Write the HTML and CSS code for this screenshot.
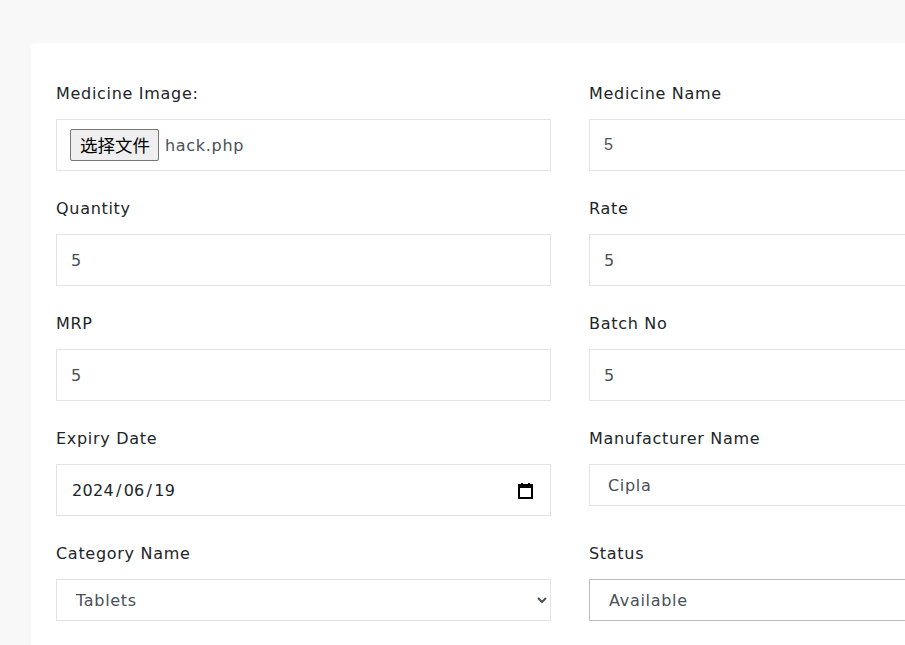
FILE: index.html
```html
<!DOCTYPE html>
<html>
<head>
<meta charset="utf-8">
<link rel="stylesheet" href="styles.css">
</head>
<body>
<div class="card">
  <form class="form-grid">
    <div class="group">
      <label class="lbl">Medicine Image:</label>
      <div class="ctrl file-box"><span class="file-btn">选择文件</span><span class="file-name">hack.php</span></div>
    </div>
    <div class="group">
      <label class="lbl">Medicine Name</label>
      <input class="ctrl plain" type="text" value="5">
    </div>
    <div class="group">
      <label class="lbl">Quantity</label>
      <input class="ctrl" type="text" value="5">
    </div>
    <div class="group">
      <label class="lbl">Rate</label>
      <input class="ctrl" type="text" value="5">
    </div>
    <div class="group">
      <label class="lbl">MRP</label>
      <input class="ctrl" type="text" value="5">
    </div>
    <div class="group">
      <label class="lbl">Batch No</label>
      <input class="ctrl" type="text" value="5">
    </div>
    <div class="group">
      <label class="lbl">Expiry Date</label>
      <div class="ctrl date">
        <span class="date-val">2024<span class="sep">/</span>06<span class="sep">/</span>19</span>
        <svg class="cal" width="15" height="17" viewBox="0 0 15 17">
          <rect x="1" y="3" width="13" height="13" fill="none" stroke="#000" stroke-width="2"/>
          <rect x="1" y="3" width="13" height="3" fill="#000"/>
          <rect x="3" y="1" width="2" height="3" fill="#000"/>
          <rect x="10" y="1" width="2" height="3" fill="#000"/>
        </svg>
      </div>
    </div>
    <div class="group">
      <label class="lbl">Manufacturer Name</label>
      <input class="ctrl short wide-pad" type="text" value="Cipla">
    </div>
    <div class="group">
      <label class="lbl">Category Name</label>
      <select class="ctrl short sel"><option>Tablets</option></select>
    </div>
    <div class="group">
      <label class="lbl">Status</label>
      <select class="ctrl short sel status"><option>Available</option></select>
    </div>
  </form>
</div>
</body>
</html>
```
FILE: styles.css
```css
html, body {
  margin: 0;
  padding: 0;
  background: #f8f8f8;
  font-family: "DejaVu Sans", sans-serif;
  overflow: hidden;
}
.card {
  margin: 43px 0 0 31px;
  width: 1100px;
  background: #fff;
  border-radius: 5px 0 0 0;
  padding: 38px 0 40px 25px;
  box-sizing: border-box;
  min-height: 620px;
}
.form-grid {
  display: grid;
  grid-template-columns: 495px 495px;
  column-gap: 38px;
  row-gap: 25px;
  align-items: start;
}
.group {
  display: flex;
  flex-direction: column;
}
.lbl {
  font-size: 16px;
  line-height: 24px;
  letter-spacing: 0.7px;
  color: #212529;
  padding-top: 1px;
  margin-bottom: 13px;
}
.ctrl {
  box-sizing: border-box;
  height: 52px;
  width: 100%;
  border: 1px solid #e3e3e3;
  background: #fff;
  padding: 0 14px;
  font-family: "DejaVu Sans", sans-serif;
  font-size: 16px;
  letter-spacing: 0.7px;
  color: #495057;
  outline: none;
  margin: 0;
  border-radius: 0;
}
.plain {
  font-family: "Liberation Sans", Arial, sans-serif;
  font-size: 16px;
  letter-spacing: 0;
}
.short {
  height: 42px;
}
.wide-pad {
  padding-left: 18px;
}
.file-box {
  display: flex;
  align-items: center;
  padding: 0 13px;
}
.file-btn {
  font-family: "Noto Sans CJK SC", sans-serif;
  font-size: 17.5px;
  letter-spacing: 0;
  color: #000;
  background: #efefef;
  border: 1px solid #767676;
  border-radius: 2px;
  height: 32px;
  box-sizing: border-box;
  padding: 0 8px 0 9px;
  display: flex;
  align-items: center;
  line-height: 1;
}
.file-name {
  margin-left: 6px;
  color: #495057;
}
.date {
  display: flex;
  align-items: center;
  justify-content: space-between;
  padding-left: 15px;
  padding-right: 17px;
  color: #212529;
  letter-spacing: 0.3px;
}
.sep {
  margin: 0 2px;
}
.cal {
  display: block;
}
.sel {
  padding-left: 15px;
  padding-right: 8px;
}
.status {
  border-color: #bdbdbd;
}
```
